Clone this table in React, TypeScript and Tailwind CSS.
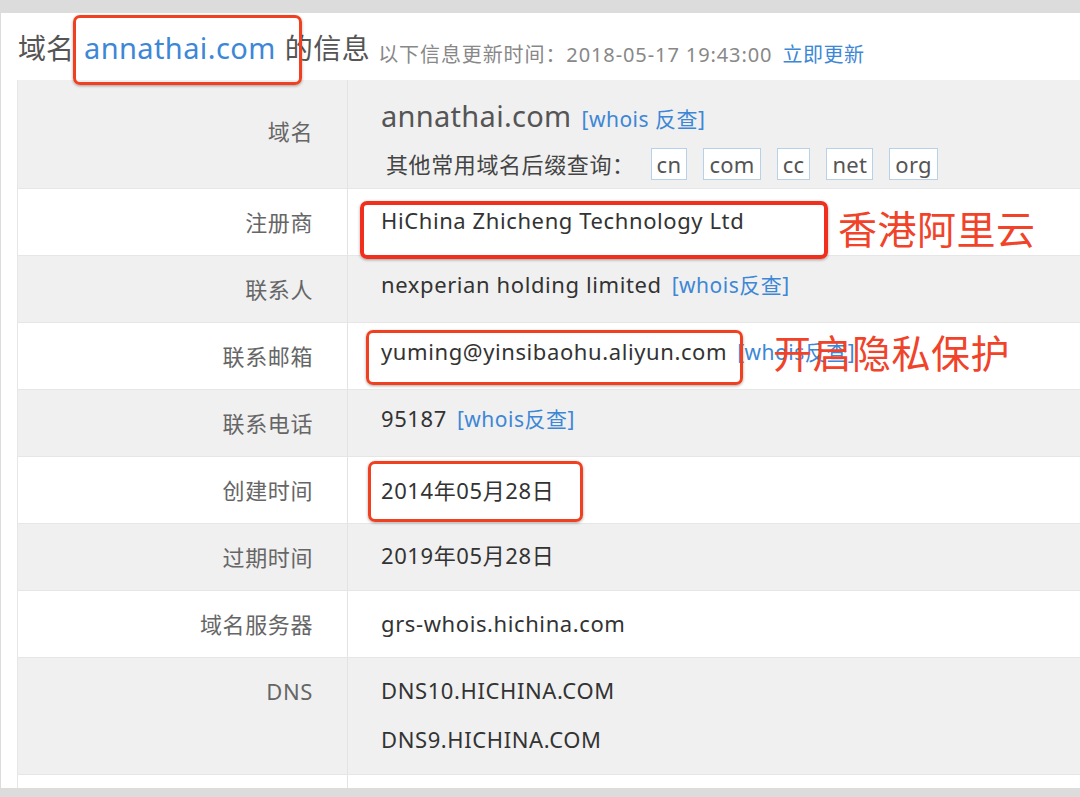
import type { ReactNode } from "react";

type Row = {
  label: string;
  height: string;
  labelPad: string;
  shaded: boolean;
  value: ReactNode;
};

const FONT = {
  fontFamily: '"Noto Sans", "Noto Sans CJK SC", sans-serif',
};

function Whois({ spaced }: { spaced?: boolean }) {
  return (
    <span className="ml-[10px] text-[21px] tracking-[0.5px] text-[#3d87d6]">
      [whois{spaced ? " " : ""}反查]
    </span>
  );
}

const SUFFIXES = ["cn", "com", "cc", "net", "org"];

const ROWS: Row[] = [
  {
    label: "域名",
    height: "h-[109px]",
    labelPad: "pt-[36px]",
    shaded: true,
    value: (
      <div className="flex flex-col pt-[8px]">
        <div className="flex items-baseline h-[36px]">
          <span className="text-[29px] tracking-[0.3px] text-[#555]">annathai.com</span>
          <Whois spaced />
        </div>
        <div className="flex items-center h-[32px] mt-[11px] ml-[5px]">
          <span className="text-[22px] text-[#444] tracking-[0.6px]">其他常用域名后缀查询：</span>
          <div className="flex gap-[16px] ml-[16px]">
            {SUFFIXES.map((s) => (
              <span
                key={s}
                className="h-[32px] px-[5px] flex items-center border border-[#b7d2e8] bg-white text-[22px] tracking-[0.3px] text-[#555]"
              >
                {s}
              </span>
            ))}
          </div>
        </div>
      </div>
    ),
  },
  {
    label: "注册商",
    height: "h-[67px]",
    labelPad: "pt-[18px]",
    shaded: false,
    value: <span className="relative top-[3px]">HiChina Zhicheng Technology Ltd</span>,
  },
  {
    label: "联系人",
    height: "h-[67px]",
    labelPad: "pt-[18px]",
    shaded: true,
    value: (
      <span>
        nexperian holding limited
        <Whois />
      </span>
    ),
  },
  {
    label: "联系邮箱",
    height: "h-[67px]",
    labelPad: "pt-[18px]",
    shaded: false,
    value: (
      <span>
        yuming@yinsibaohu.aliyun.com
        <Whois />
      </span>
    ),
  },
  {
    label: "联系电话",
    height: "h-[67px]",
    labelPad: "pt-[18px]",
    shaded: true,
    value: (
      <span>
        95187
        <Whois />
      </span>
    ),
  },
  {
    label: "创建时间",
    height: "h-[67px]",
    labelPad: "pt-[18px]",
    shaded: false,
    value: <span className="relative top-[5px]">2014年05月28日</span>,
  },
  {
    label: "过期时间",
    height: "h-[67px]",
    labelPad: "pt-[18px]",
    shaded: true,
    value: <span className="relative top-[3px]">2019年05月28日</span>,
  },
  {
    label: "域名服务器",
    height: "h-[67px]",
    labelPad: "pt-[18px]",
    shaded: false,
    value: <span className="relative top-[4px]">grs-whois.hichina.com</span>,
  },
  {
    label: "DNS",
    height: "h-[117px]",
    labelPad: "pt-[18px]",
    shaded: true,
    value: (
      <div className="flex flex-col gap-[19px] pt-[4px]">
        <span>DNS10.HICHINA.COM</span>
        <span>DNS9.HICHINA.COM</span>
      </div>
    ),
  },
  { label: "", height: "h-[20px]", labelPad: "", shaded: false, value: null },
];

export default function App() {
  return (
    <div
      className="w-[1080px] h-[797px] bg-[#dcdcdc] pt-[13px] overflow-hidden"
      style={FONT}
    >
      <div className="relative ml-[1px] h-[775px] bg-white overflow-hidden">
        {/* title */}
        <div className="h-[67px] pl-[17px] flex items-center pt-[2px]">
          <span className="text-[28px] text-[#555]">域名</span>
          <span className="ml-[10px] text-[29px] tracking-[0.4px] text-[#3d87d6]">annathai.com</span>
          <span className="ml-[9px] text-[28px] tracking-[0.5px] text-[#555]">的信息</span>
          <span className="ml-[8px] mt-[14px] text-[20px] tracking-[0.9px] text-[#888]">
            以下信息更新时间：2018-05-17 19:43:00
          </span>
          <span className="ml-[10px] mt-[14px] text-[20px] tracking-[0.5px] text-[#3d87d6]">立即更新</span>
        </div>

        {/* table */}
        <div className="ml-[16px] border-l border-[#e6e6e6]">
          {ROWS.map((r, i) => (
            <div
              key={i}
              className={`flex ${r.height} border-b border-[#e6e6e6] ${
                r.shaded ? "bg-[#f0f0f0]" : "bg-white"
              }`}
            >
              <div
                className={`w-[330px] shrink-0 border-r border-[#e3e3e3] pr-[34px] ${r.labelPad} text-right text-[22px] text-[#666] tracking-[0.6px] leading-[30px]`}
              >
                {r.label}
              </div>
              <div className="flex-1 pl-[33px] pt-[13px] text-[22px] tracking-[0.6px] text-[#333] leading-[30px]">
                {r.value}
              </div>
            </div>
          ))}
        </div>

        {/* annotations */}
        <div className="absolute left-[72px] top-[2px] w-[229px] h-[70px] rounded-[7px] border-[3px] border-[#f1401f] shadow-[0_1px_3px_rgba(0,0,0,0.35)]" />
        <div className="absolute left-[359px] top-[188px] w-[468px] h-[58px] rounded-[7px] border-[4px] border-[#f12f1c] shadow-[0_1px_3px_rgba(0,0,0,0.35)]" />
        <div className="absolute left-[365px] top-[317px] w-[377px] h-[55px] rounded-[7px] border-[3px] border-[#f1401f] shadow-[0_1px_3px_rgba(0,0,0,0.35)]" />
        <div className="absolute left-[367px] top-[448px] w-[215px] h-[61px] rounded-[7px] border-[3px] border-[#f1401f] shadow-[0_1px_3px_rgba(0,0,0,0.35)]" />
        <div className="absolute left-[837px] top-[192px] text-[39px] tracking-[0.5px] leading-[48px] text-[#f0432a]">
          香港阿里云
        </div>
        <div className="absolute left-[772px] top-[316px] text-[39px] tracking-[0.5px] leading-[48px] text-[#f0432a]">
          开启隐私保护
        </div>
      </div>
    </div>
  );
}
